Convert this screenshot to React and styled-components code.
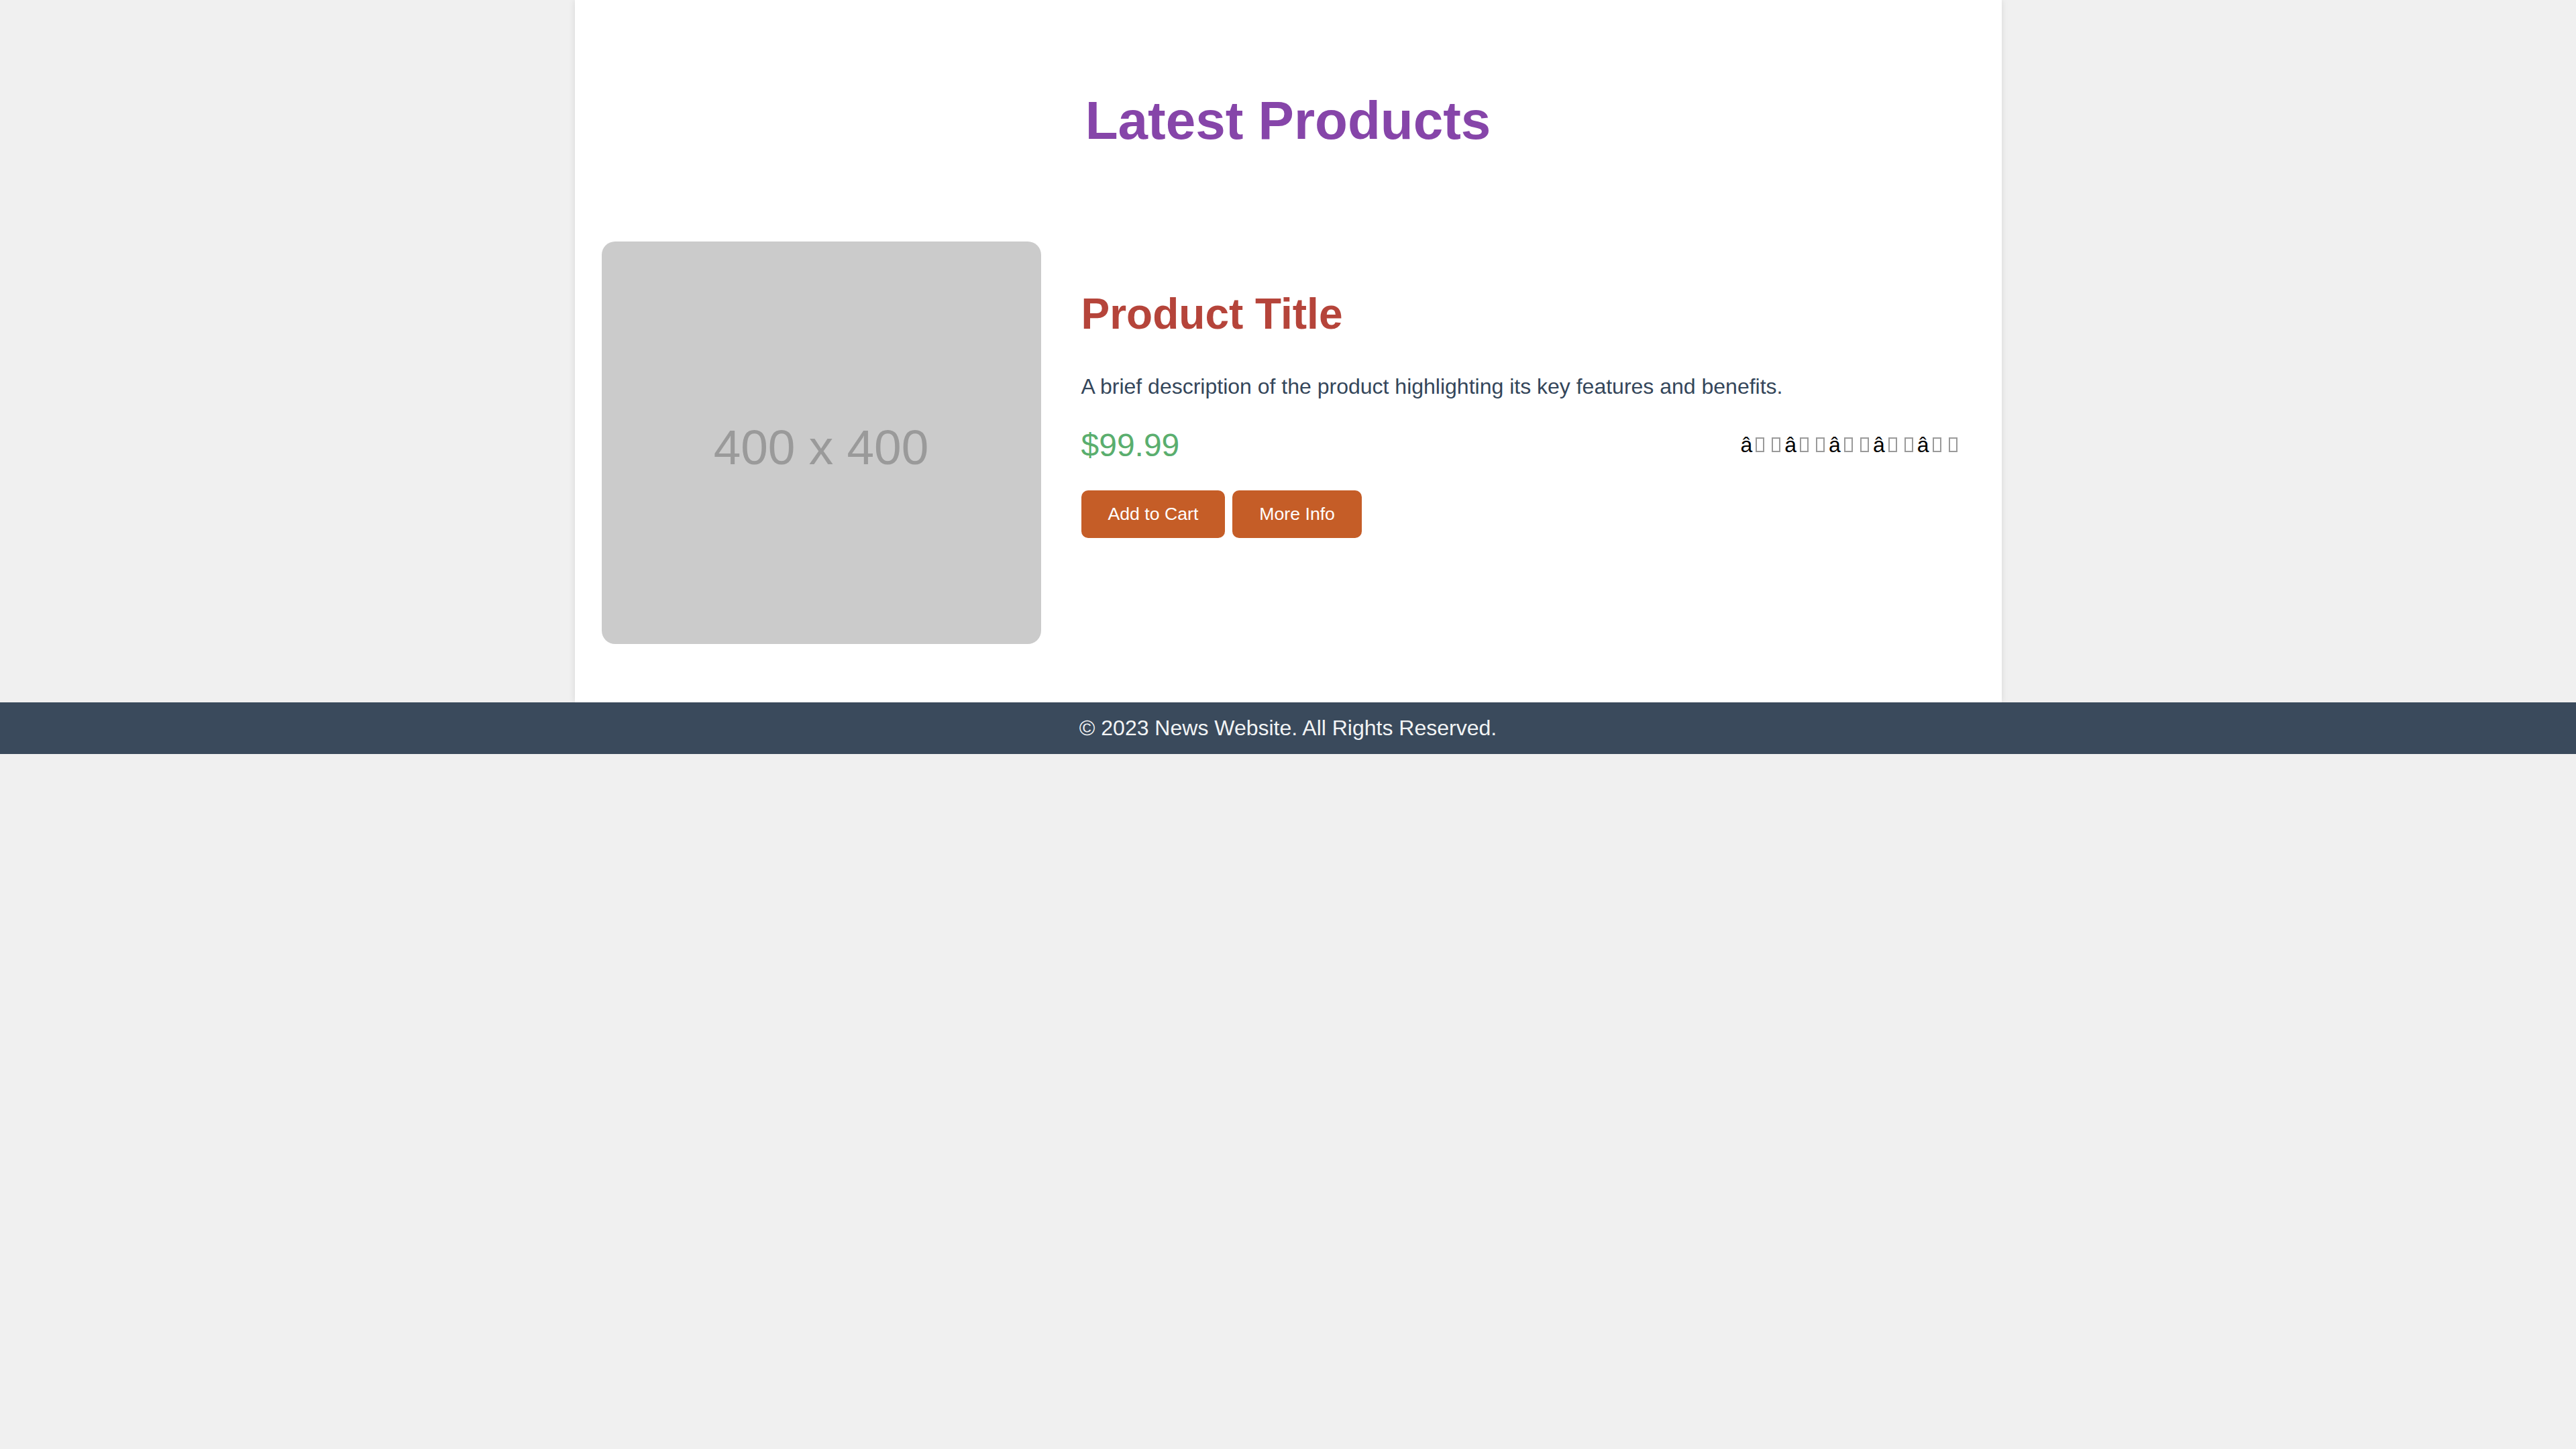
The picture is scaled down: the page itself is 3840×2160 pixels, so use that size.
import styled, { createGlobalStyle } from "styled-components";

const GlobalStyle = createGlobalStyle`
  html, body {
    margin: 0;
    padding: 0;
    background: #f0f0f0;
    font-family: "Liberation Sans", Arial, sans-serif;
    font-size: 32px;
  }
`;

const Container = styled.main`
  width: 2127px;
  margin: 0 auto;
  padding: 40px;
  box-sizing: border-box;
  background: #ffffff;
  box-shadow: 0 0 10px rgba(0, 0, 0, 0.1);
`;

const Header = styled.header`
  padding: 40px 0;
  text-align: center;
`;

const Heading = styled.h1`
  margin: 54px 0;
  font-size: 80px;
  font-weight: 700;
  color: #8645a9;
`;

const ProductCard = styled.section`
  display: flex;
  align-items: flex-start;
  margin: 40px 0;
`;

const ImageBox = styled.div`
  flex: 0 0 655px;
  height: 600px;
  margin-right: 40px;
  margin-bottom: 7px;
  padding-top: 12px;
  box-sizing: border-box;
  border-radius: 20px;
  background: #cbcbcb;
  display: flex;
  align-items: center;
  justify-content: center;
  color: #9a9a9a;
  font-size: 73px;
`;

const Details = styled.div`
  flex: 1;
  padding: 20px;
`;

const Title = styled.h2`
  margin: 51px 0 53px;
  font-size: 64px;
  font-weight: 700;
  color: #b5443a;
`;

const Description = styled.p`
  margin: 0 0 41px;
  font-size: 32px;
  color: #34465a;
`;

const PriceRow = styled.div`
  display: flex;
  justify-content: space-between;
  align-items: center;
  margin-bottom: 40px;
`;

const Price = styled.span`
  font-size: 48px;
  color: #5aae6e;
`;

const Rating = styled.span`
  font-size: 32px;
  color: #000000;
  white-space: nowrap;
`;

// the star bytes show up as two missing-glyph boxes after each "â"
const MissingGlyph = styled.span`
  display: inline-block;
  width: 13px;
  height: 22px;
  margin: 0 6px 0 5px;
  box-sizing: border-box;
  border: 2px solid #9a9a9a;
  vertical-align: baseline;
`;

const Actions = styled.div`
  display: flex;
  gap: 11px;
`;

const Button = styled.button`
  padding: 20px 40px;
  border: none;
  border-radius: 10px;
  background: #c55d27;
  color: #ffffff;
  font-family: "Liberation Sans", Arial, sans-serif;
  font-size: 26.67px;
  cursor: pointer;
`;

const Footer = styled.footer`
  padding: 20px;
  background: #3a4a5c;
  color: #f2f4f5;
  text-align: center;
  font-size: 32px;
`;

export default function App() {
  return (
    <>
      <GlobalStyle />
      <Container>
        <Header>
          <Heading>Latest Products</Heading>
        </Header>
        <ProductCard>
          <ImageBox>400 x 400</ImageBox>
          <Details>
            <Title>Product Title</Title>
            <Description>
              A brief description of the product highlighting its key features
              and benefits.
            </Description>
            <PriceRow>
              <Price>$99.99</Price>
              <Rating>
                {[0, 1, 2, 3, 4].map((i) => (
                  <span key={i}>
                    â
                    <MissingGlyph />
                    <MissingGlyph />
                  </span>
                ))}
              </Rating>
            </PriceRow>
            <Actions>
              <Button>Add to Cart</Button>
              <Button>More Info</Button>
            </Actions>
          </Details>
        </ProductCard>
      </Container>
      <Footer>© 2023 News Website. All Rights Reserved.</Footer>
    </>
  );
}
